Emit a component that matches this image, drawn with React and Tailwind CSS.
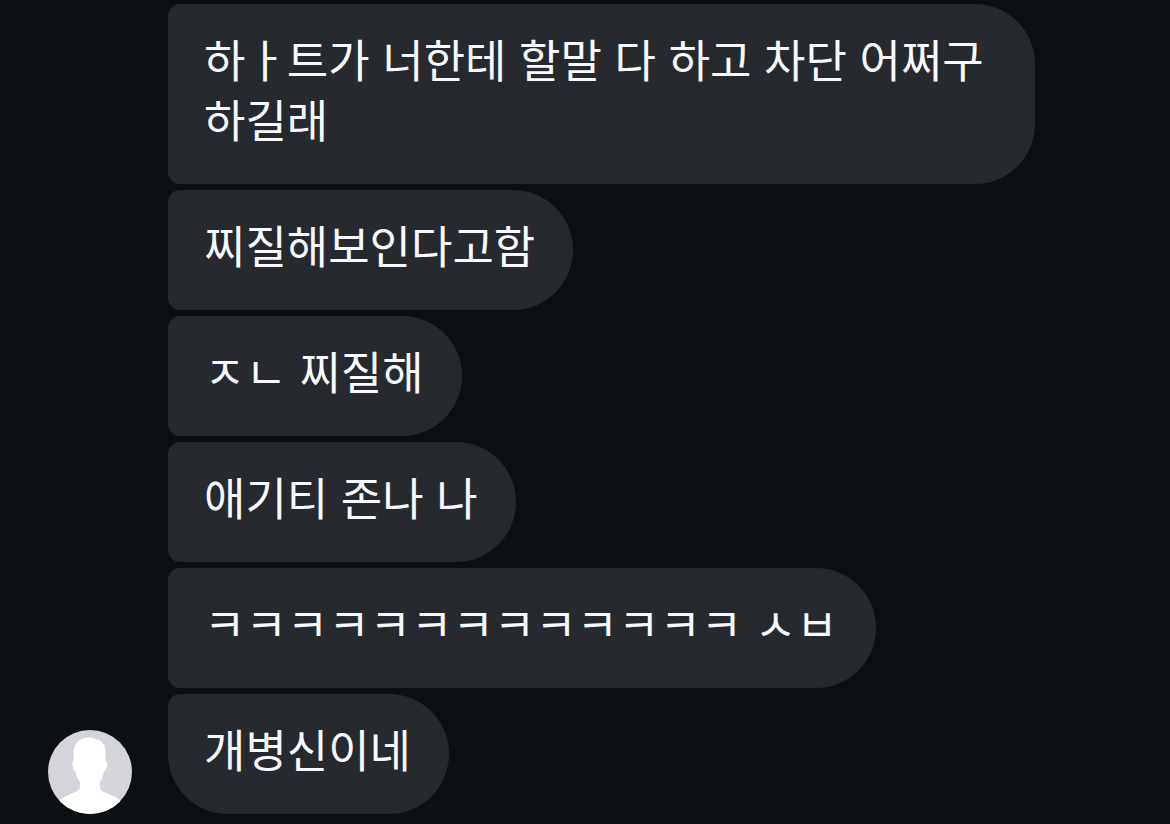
const messages = [
  '하ㅏ트가 너한테 할말 다 하고 차단 어쩌구 하길래',
  '찌질해보인다고함',
  'ㅈㄴ 찌질해',
  '애기티 존나 나',
  'ㅋㅋㅋㅋㅋㅋㅋㅋㅋㅋㅋㅋㅋ ㅅㅂ',
  '개병신이네',
];

function Avatar() {
  return (
    <svg
      viewBox="0 0 84 84"
      role="img"
      aria-label="Profile"
      className="size-[84px] shrink-0 rounded-full bg-[#d4d4da]"
    >
      <path
        fill="#ffffff"
        d="M25.500 22C26 13 32 7.500 41 7.500C44 7.500 46 8 48 9.200C54 9.500 57.500 15 57.500 22V31C59.500 31.500 59.500 35 58.500 38C58 40.500 57 41.500 56 41.500C55 46 53.500 49 52 52V56C52 60 54 61.500 58 63C64 65 68 66.500 72 70V84H12V70C16 66.500 20 65 26 62.500C30 61 32 59.500 32 56V52C29.500 49 28 45.500 27.500 41.500C26 41.500 25.500 40 25 37C24 33 24 31.500 25.800 31Z"
      />
    </svg>
  );
}

export default function App() {
  return (
    <main className="flex min-h-screen items-end gap-9 bg-[#0b1014] px-12 pt-1 pb-[10px]">
      <Avatar />
      <ul className="flex min-w-0 flex-1 flex-col items-start gap-1.5">
        {messages.map((text) => (
          <li
            key={text}
            className="max-w-[867px] rounded-l-xl rounded-r-[60px] bg-[#26292d] pt-7 pr-[38px] pb-8 pl-9 font-['Inter','Noto_Sans_CJK_KR',sans-serif] text-[45px] leading-[60px] break-keep text-[#f7f9fd] last:rounded-bl-[60px]"
          >
            {text}
          </li>
        ))}
      </ul>
    </main>
  );
}
